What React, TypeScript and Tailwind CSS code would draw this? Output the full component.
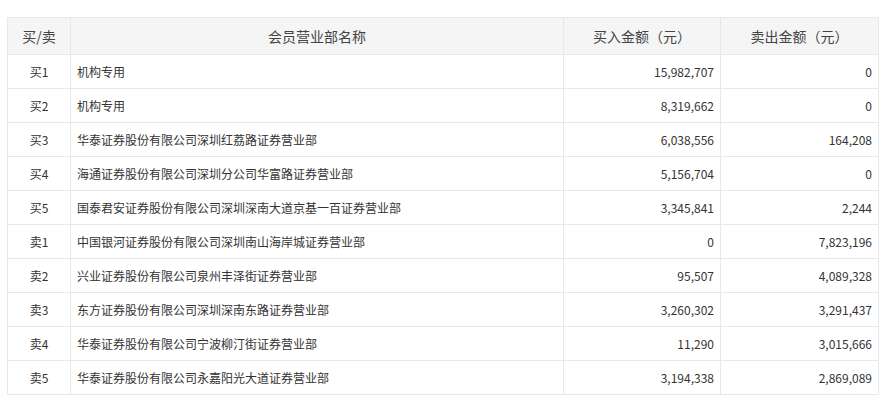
const rows = [
  ["买1", "机构专用", "15,982,707", "0"],
  ["买2", "机构专用", "8,319,662", "0"],
  ["买3", "华泰证券股份有限公司深圳红荔路证券营业部", "6,038,556", "164,208"],
  ["买4", "海通证券股份有限公司深圳分公司华富路证券营业部", "5,156,704", "0"],
  ["买5", "国泰君安证券股份有限公司深圳深南大道京基一百证券营业部", "3,345,841", "2,244"],
  ["卖1", "中国银河证券股份有限公司深圳南山海岸城证券营业部", "0", "7,823,196"],
  ["卖2", "兴业证券股份有限公司泉州丰泽街证券营业部", "95,507", "4,089,328"],
  ["卖3", "东方证券股份有限公司深圳深南东路证券营业部", "3,260,302", "3,291,437"],
  ["卖4", "华泰证券股份有限公司宁波柳汀街证券营业部", "11,290", "3,015,666"],
  ["卖5", "华泰证券股份有限公司永嘉阳光大道证券营业部", "3,194,338", "2,869,089"],
];

const App = () => {
  return (
    <div className="bg-white w-[888px] h-[411px] pt-[17px] pl-[7px] font-['Microsoft_YaHei','Noto_Sans_CJK_SC',sans-serif] text-[#333]">
      <table className="w-[871px] border-collapse border border-[#e8e8e8] table-fixed">
        <colgroup>
          <col className="w-[63px]" />
          <col className="w-[493px]" />
          <col className="w-[157px]" />
          <col className="w-[158px]" />
        </colgroup>
        <thead>
          <tr className="bg-[#f5f5f5] h-[37px] text-[14px] text-[#444]">
            <th className="font-normal border border-[#e8e8e8] text-center">买/卖</th>
            <th className="font-normal border border-[#e8e8e8] text-center">会员营业部名称</th>
            <th className="font-normal border border-[#e8e8e8] text-center">买入金额（元）</th>
            <th className="font-normal border border-[#e8e8e8] text-center">卖出金额（元）</th>
          </tr>
        </thead>
        <tbody className="text-[12px]">
          {rows.map((r) => (
            <tr key={r[0]} className="h-[34px]">
              <td className="border border-[#e8e8e8] text-center">{r[0]}</td>
              <td className="border border-[#e8e8e8] px-[6px]">{r[1]}</td>
              <td className="border border-[#e8e8e8] px-[6px] text-right">{r[2]}</td>
              <td className="border border-[#e8e8e8] px-[6px] text-right">{r[3]}</td>
            </tr>
          ))}
        </tbody>
      </table>
    </div>
  );
};

export default App;
